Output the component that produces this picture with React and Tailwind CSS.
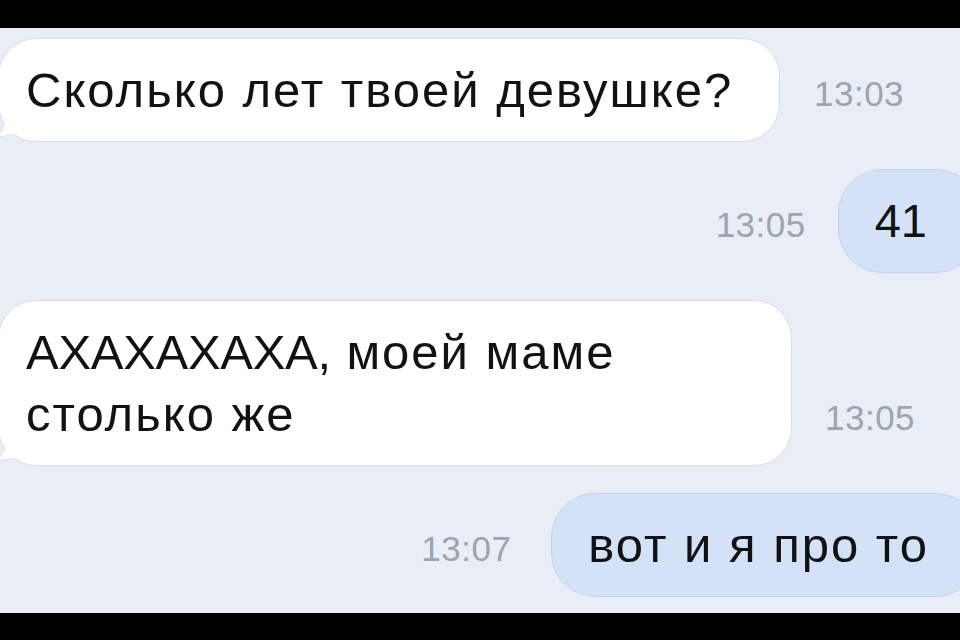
import React from "react";

const font = { fontFamily: '"Liberation Sans", Arial, sans-serif' };

function Time({ children }) {
  return (
    <span className="text-[35px] leading-none text-[#9ea4ac] tracking-[0.5px] mb-[31px] shrink-0">
      {children}
    </span>
  );
}

function Incoming({ children, className = "" }) {
  return (
    <div className={"relative bg-white border border-[#d8dde5] rounded-[38px] -ml-[2px] pl-[27px] pr-[30px] py-[20px] " + className}>
      <svg className="absolute -left-[4px] bottom-[3px]" width="20" height="16" viewBox="0 0 20 16">
        <path d="M20 0 L20 12 C14 14 8 15 1 14 C6 11 9 6 9 0 Z" fill="#ffffff" />
        <path d="M9 1 C9 6 6 11 1 14 C7 15 12 14 17 12" fill="none" stroke="#d8dde5" strokeWidth="1" />
      </svg>
      <p className="relative text-[49px] leading-[62px] tracking-[2px] text-[#121212] whitespace-nowrap">{children}</p>
    </div>
  );
}

function Outgoing({ children, className = "" }) {
  return (
    <div className="relative bg-[#d3e2f7] border border-[#c6d4ea] rounded-[44px] -mr-[20px] pl-[36px] pr-[50px] py-[20px]">
      <p className={"relative leading-[62px] text-[#121212] " + className}>{children}</p>
    </div>
  );
}

export default function App() {
  return (
    <div className="w-[960px] h-[640px] flex flex-col bg-black" style={font}>
      <div className="h-[28px] shrink-0" />
      <div className="flex-1 bg-[#e9eef6] overflow-hidden flex flex-col gap-[27px] pt-[10px]">
        <div className="flex items-end gap-[34px]">
          <Incoming className="w-[782px]">Сколько лет твоей девушке?</Incoming>
          <Time>13:03</Time>
        </div>
        <div className="flex items-end justify-end gap-[32px]">
          <Time>13:05</Time>
          <Outgoing className="text-[47px] pr-[2px]">41</Outgoing>
        </div>
        <div className="flex items-end gap-[33px]">
          <Incoming className="w-[794px]">
            <span className="tracking-[-0.3px]">АХАХАХАХА,</span> моей маме
            <br />
            столько же
          </Incoming>
          <Time>13:05</Time>
        </div>
        <div className="flex items-end justify-end gap-[40px]">
          <Time>13:07</Time>
          <Outgoing className="text-[49px] tracking-[2px]">вот и я про то</Outgoing>
        </div>
      </div>
      <div className="h-[27px] shrink-0" />
    </div>
  );
}
